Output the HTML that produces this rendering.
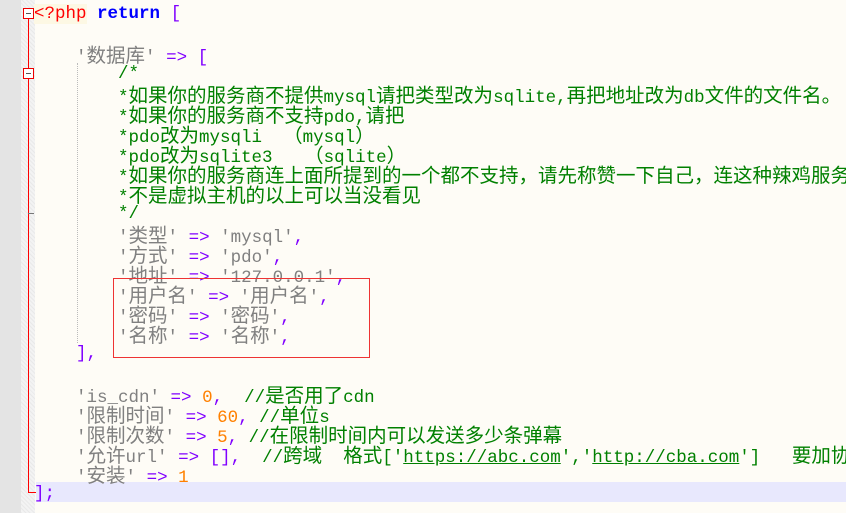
<!DOCTYPE html><html><head><meta charset="utf-8"><style>
body{margin:0;width:846px;height:513px;overflow:hidden;background:#fefcf6;position:relative;font-family:"Liberation Mono",monospace;font-size:17.5px}
.g{position:absolute;left:0;top:0;width:21px;height:513px;background:#e4e4e4}
.f{position:absolute;left:21px;top:0;width:14px;height:513px;background:#f3f3f3;background-image:repeating-linear-gradient(45deg,#e9e9e9 0 1px,transparent 1px 3px)}
.l{position:absolute;left:34px;top:0;height:20px;line-height:20px;white-space:pre;}
.z{font-family:"Noto Sans CJK SC",sans-serif;font-size:19.5px;line-height:20px}
.s{color:#808080}.o{color:#8000ff}.n{color:#ff8000}.c{color:#008000}.k{color:#0000ff;font-weight:bold}.r{color:#ff0000}
.bx{position:absolute;width:9px;height:9px;border:1px solid #e00;background:#fff;left:23px}
.bx:after{content:"";position:absolute;left:2px;top:4px;width:5px;height:1px;background:#555}
</style></head><body>
<div class="g"></div><div class="f"></div>
<div style="position:absolute;left:28px;top:14px;width:1px;height:479px;background:#f00"></div>
<div style="position:absolute;left:28px;top:492px;width:8px;height:1px;background:#f00"></div>
<div style="position:absolute;left:28px;top:213px;width:6px;height:1px;background:#777"></div>
<div style="position:absolute;left:36px;top:482px;width:810px;height:20px;background:#e8e8fd"></div>
<div style="position:absolute;left:77px;top:63px;height:280px;border-left:1px dotted #bbb"></div>
<div class="bx" style="top:8px"></div><div class="bx" style="top:68px"></div>
<div id="code">
<div class="l" style="top:4px"><span class="r" style="background:#fdf8e4">&lt;?php</span> <span class="k">return</span> <span class="o">[</span></div>
<div class="l" style="top:44px">    <span class="s">'数据库'</span> <span class="o">=&gt;</span> <span class="o">[</span></div>
<div class="l c" style="top:64px">        /*</div>
<div class="l c" style="top:84px">        *如果你的服务商不提供mysql请把类型改为sqlite,再把地址改为db文件的文件名。</div>
<div class="l c" style="top:104px">        *如果你的服务商不支持pdo,请把</div>
<div class="l c" style="top:124px">        *pdo改为mysqli  （mysql）</div>
<div class="l c" style="top:144px">        *pdo改为sqlite3   （sqlite）</div>
<div class="l c" style="top:164px">        *如果你的服务商连上面所提到的一个都不支持，请先称赞一下自己，连这种辣鸡服务商</div>
<div class="l c" style="top:184px">        *不是虚拟主机的以上可以当没看见</div>
<div class="l c" style="top:204px">        */</div>
<div class="l" style="top:224px">        <span class="s">'类型'</span> <span class="o">=&gt;</span> <span class="s">'mysql'</span><span class="o">,</span></div>
<div class="l" style="top:244px">        <span class="s">'方式'</span> <span class="o">=&gt;</span> <span class="s">'pdo'</span><span class="o">,</span></div>
<div class="l" style="top:264px">        <span class="s">'地址'</span> <span class="o">=&gt;</span> <span class="s">'127.0.0.1'</span><span class="o">,</span></div>
<div class="l" style="top:284px">        <span class="s">'用户名'</span> <span class="o">=&gt;</span> <span class="s">'用户名'</span><span class="o">,</span></div>
<div class="l" style="top:304px">        <span class="s">'密码'</span> <span class="o">=&gt;</span> <span class="s">'密码'</span><span class="o">,</span></div>
<div class="l" style="top:324px">        <span class="s">'名称'</span> <span class="o">=&gt;</span> <span class="s">'名称'</span><span class="o">,</span></div>
<div class="l" style="top:344px">    <span class="o">],</span></div>
<div class="l" style="top:384px">    <span class="s">'is_cdn'</span> <span class="o">=&gt;</span> <span class="n">0</span><span class="o">,</span>  <span class="c">//是否用了cdn</span></div>
<div class="l" style="top:404px">    <span class="s">'限制时间'</span> <span class="o">=&gt;</span> <span class="n">60</span><span class="o">,</span> <span class="c">//单位s</span></div>
<div class="l" style="top:424px">    <span class="s">'限制次数'</span> <span class="o">=&gt;</span> <span class="n">5</span><span class="o">,</span> <span class="c">//在限制时间内可以发送多少条弹幕</span></div>
<div class="l" style="top:444px">    <span class="s">'允许url'</span> <span class="o">=&gt;</span> <span class="o">[],</span>  <span class="c">//跨域  格式['<u>https://abc.com</u>','<u>http://cba.com</u>']   要加协议</span></div>
<div class="l" style="top:464px">    <span class="s">'安装'</span> <span class="o">=&gt;</span> <span class="n">1</span></div>
<div class="l" style="top:484px"><span class="o">];</span></div>
</div>
<div style="position:absolute;left:113px;top:278px;width:255px;height:78px;border:1px solid #e33"></div>
<script>
(function(){var w=document.createTreeWalker(document.getElementById('code'),NodeFilter.SHOW_TEXT),a=[],n;while(n=w.nextNode())a.push(n);
a.forEach(function(t){var s=t.nodeValue;if(!/[^\x00-\x7f]/.test(s))return;var f=document.createDocumentFragment();
s.split(/([^\x00-\x7f]+)/).forEach(function(p,i){if(!p)return;if(i%2){var e=document.createElement('span');e.className='z';e.textContent=p;f.appendChild(e);}else f.appendChild(document.createTextNode(p));});
t.parentNode.replaceChild(f,t);});})();
</script>
</body></html>
